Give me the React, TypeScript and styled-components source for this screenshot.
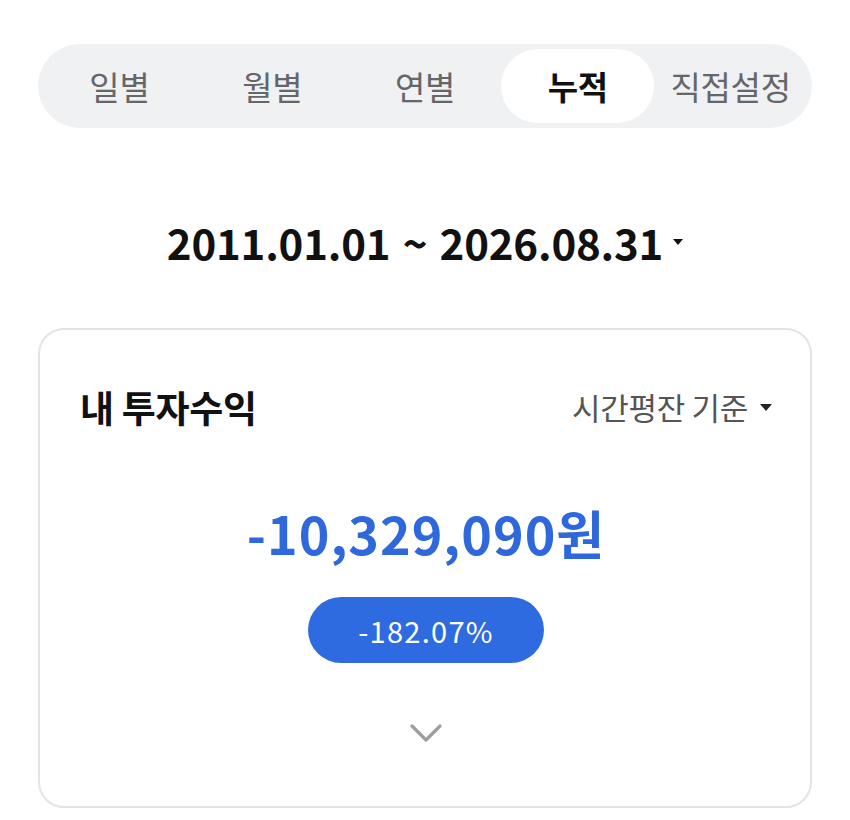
import styled, { createGlobalStyle } from "styled-components";

const GlobalStyle = createGlobalStyle`
    html, body {
        margin: 0;
        padding: 0;
        background: #ffffff;
    }
    body {
        font-family: "Noto Sans CJK KR", "Noto Sans", sans-serif;
    }
`

const tabs = ["일별", "월별", "연별", "누적", "직접설정"];

const App: React.FC = () => {
    return <Page>
                <GlobalStyle />
                <TabBar>
                    {tabs.map((t) => (
                        <Tab key={t} $active={t === "누적"}>{t}</Tab>
                    ))}
                </TabBar>
                <DateRow>
                    <DateText>2011.01.01 ~ 2026.08.31</DateText>
                    <Caret $size={5} $color="#111111" />
                </DateRow>
                <Card>
                    <CardHeader>
                        <CardTitle>내 투자수익</CardTitle>
                        <Basis>
                            시간평잔 기준
                            <Caret $size={6} $color="#222222" />
                        </Basis>
                    </CardHeader>
                    <Amount>-10,329,090원</Amount>
                    <RatePill>-182.07%</RatePill>
                    <Expand>
                        <svg width="34" height="22" viewBox="0 0 34 22" fill="none">
                            <path d="M3 4 L17 18 L31 4" stroke="#9e9e9e" strokeWidth="3.2" strokeLinecap="round" strokeLinejoin="round" />
                        </svg>
                    </Expand>
                </Card>
            </Page>
};

const Page = styled.div`
    width: 850px;
    padding: 44px 38px 0 38px;
    box-sizing: border-box;
`

const TabBar = styled.div`
    display: grid;
    grid-template-columns: repeat(5, 1fr);
    padding: 5px;
    height: 84px;
    box-sizing: border-box;
    background-color: #f0f1f2;
    border-radius: 42px;
`

const Tab = styled.div<{ $active: boolean }>`
    display: flex;
    align-items: center;
    justify-content: center;
    border-radius: 37px;
    font-size: 33px;
    letter-spacing: -0.3px;
    font-weight: ${(p) => (p.$active ? 700 : 400)};
    color: ${(p) => (p.$active ? "#111111" : "#646669")};
    background-color: ${(p) => (p.$active ? "#ffffff" : "transparent")};
`

const DateRow = styled.div`
    display: flex;
    align-items: center;
    justify-content: center;
    gap: 10px;
    margin-top: 86px;
    height: 56px;
`

const DateText = styled.div`
    font-size: 42px;
    line-height: 56px;
    font-weight: 700;
    color: #111111;
    letter-spacing: -0.2px;
    word-spacing: 3px;
`

const Caret = styled.span<{ $size: number; $color: string }>`
    display: inline-block;
    width: 0;
    height: 0;
    border-left: ${(p) => p.$size}px solid transparent;
    border-right: ${(p) => p.$size}px solid transparent;
    border-top: ${(p) => p.$size + 1}px solid ${(p) => p.$color};
`

const Card = styled.div`
    margin-top: 58px;
    height: 480px;
    box-sizing: border-box;
    border: 2px solid #e4e4e4;
    border-radius: 26px;
    padding: 50px 38px 0 40px;
    display: flex;
    flex-direction: column;
    align-items: center;
`

const CardHeader = styled.div`
    width: 100%;
    height: 54px;
    display: flex;
    align-items: center;
    justify-content: space-between;
`

const CardTitle = styled.div`
    font-size: 37px;
    line-height: 54px;
    font-weight: 700;
    color: #111111;
    letter-spacing: -0.3px;
`

const Basis = styled.div`
    display: flex;
    align-items: center;
    gap: 12px;
    font-size: 31px;
    line-height: 54px;
    color: #555555;
    letter-spacing: -0.3px;
`

const Amount = styled.div`
    margin-top: 62px;
    font-size: 52px;
    line-height: 74px;
    font-weight: 700;
    color: #2e68dc;
    letter-spacing: 1px;
`

const RatePill = styled.div`
    margin-top: 27px;
    width: 236px;
    height: 66px;
    border-radius: 33px;
    background-color: #2e6ae0;
    color: #ffffff;
    font-size: 29px;
    letter-spacing: 1.3px;
    display: flex;
    align-items: center;
    justify-content: center;
`

const Expand = styled.div`
    margin-top: 59px;
    display: flex;
    justify-content: center;
`

export default App;
